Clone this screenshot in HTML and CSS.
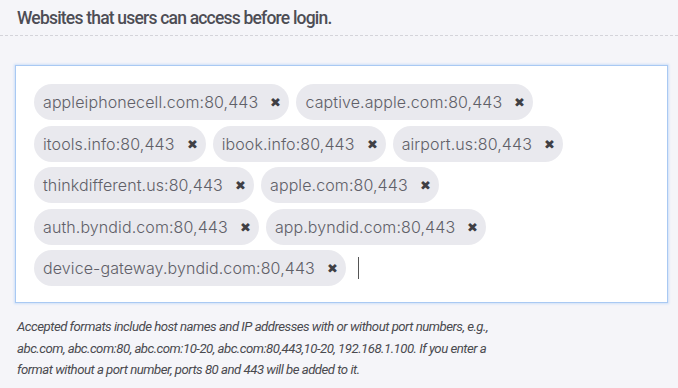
FILE: index.html
```html
<!DOCTYPE html>
<html lang="en">
<head>
  <meta charset="UTF-8">
  <meta name="viewport" content="width=device-width, initial-scale=1.0">
  <title>Walled garden</title>
  <link rel="stylesheet" href="styles.css">
</head>
<body>
  <div class="section-title">Websites that users can access before login.</div>
  <div class="tag-box">
    <div class="tag-list">
      <span class="tag">appleiphonecell.com:80,443<span class="tag-remove">&#x2716;</span></span>
      <span class="tag">captive.apple.com:80,443<span class="tag-remove">&#x2716;</span></span>
      <span class="tag">itools.info:80,443<span class="tag-remove">&#x2716;</span></span>
      <span class="tag">ibook.info:80,443<span class="tag-remove">&#x2716;</span></span>
      <span class="tag">airport.us:80,443<span class="tag-remove">&#x2716;</span></span>
      <span class="tag">thinkdifferent.us:80,443<span class="tag-remove">&#x2716;</span></span>
      <span class="tag">apple.com:80,443<span class="tag-remove">&#x2716;</span></span>
      <span class="tag">auth.byndid.com:80,443<span class="tag-remove">&#x2716;</span></span>
      <span class="tag">app.byndid.com:80,443<span class="tag-remove">&#x2716;</span></span>
      <span class="tag">device-gateway.byndid.com:80,443<span class="tag-remove">&#x2716;</span></span>
      <span class="caret"></span>
    </div>
  </div>
  <p class="hint">Accepted formats include host names and IP addresses with or without port numbers, e.g.,
    abc.com, abc.com:80, abc.com:10-20, abc.com:80,443,10-20, 192.168.1.100. If you enter a
    format without a port number, ports 80 and 443 will be added to it.</p>
</body>
</html>
```
FILE: styles.css
```css
body {
  margin: 0;
  background-color: #f5f5f9;
  font-family: Inter, "Noto Sans", sans-serif;
  color: #4d4d55;
}
.section-title {
  font-family: Roboto, "Liberation Sans", sans-serif;
  font-size: 17.5px;
  font-weight: 500;
  letter-spacing: -0.8px;
  line-height: 22px;
  color: #4d4d55;
  padding: 7px 17px 6px;
  border-bottom: 1px dashed #d4d4da;
}
.tag-box {
  margin: 29px 10px 0 15px;
  background-color: #fff;
  border: 1px solid #a9c9f3;
  box-shadow: 0 0 2px 1px #cfe0f8;
  height: 238px;
  box-sizing: border-box;
  padding: 18px 18px;
}
.tag-list {
  display: flex;
  flex-wrap: wrap;
  align-items: center;
  gap: 5.5px 7px;
}
.tag {
  display: inline-flex;
  align-items: center;
  height: 36px;
  padding: 0 8px 0 9px;
  border-radius: 18px;
  background-color: #e9e9ee;
  font-size: 16px;
  font-weight: 300;
  letter-spacing: 0.1px;
  color: #606068;
}
.tag-remove {
  margin-left: 12px;
  font-size: 13px;
  color: #3f3f44;
}
.caret {
  width: 1px;
  height: 22px;
  margin-left: 5px;
  background-color: #555;
}
.hint {
  width: 495px;
  margin: 13px 0 0 17px;
  font-family: Roboto, "Liberation Sans", sans-serif;
  font-style: italic;
  font-size: 13.2px;
  letter-spacing: -0.5px;
  line-height: 21.5px;
  color: #4a4a4f;
}
```
